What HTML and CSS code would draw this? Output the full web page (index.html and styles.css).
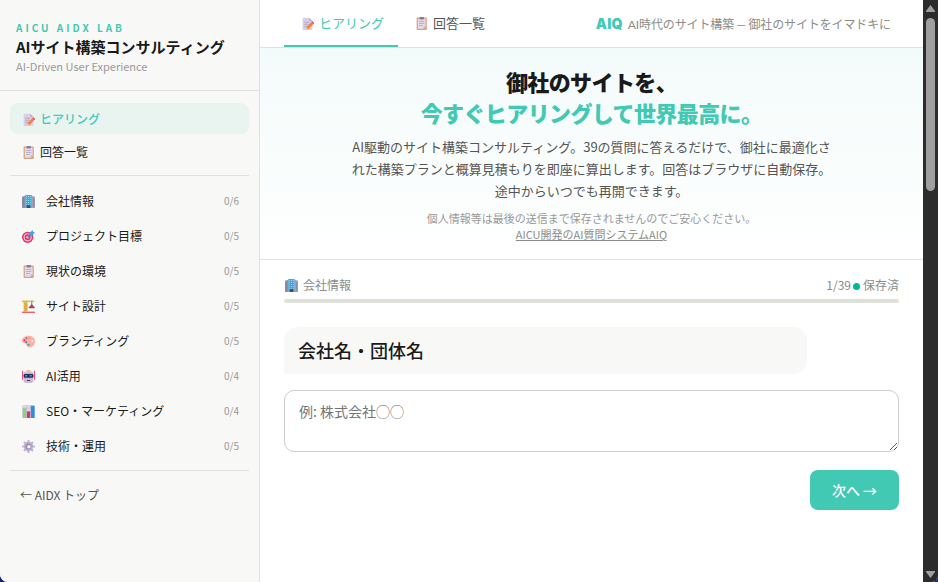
FILE: index.html
```html
<!DOCTYPE html>
<html lang="ja">
<head>
    <meta charset="UTF-8">
    <meta name="viewport" content="width=device-width, initial-scale=1.0">
    <title>AIサイト構築コンサルティング</title>
    <link rel="stylesheet" href="styles.css">
</head>
<body>
    <!-- アイコン定義 -->
    <svg class="icon-defs" width="0" height="0">
        <symbol id="memo" viewBox="0 0 16 16">
            <path fill="#d8d0e6" d="M2 1h8l4 4v10a1 1 0 0 1-1 1H2z"/>
            <path fill="#b9afc9" d="M10 1l4 4h-4z"/>
            <path stroke="#aaa0b8" d="M4 6.500h6M4 9h5M4 11.500h3"/>
            <path fill="#ff7e36" d="M12.500 6.500l2.500 2.500-6 6-3.500 1 1-3.500z"/>
            <path fill="#f6405a" d="M12.500 6.500l1.500-1.300 2.500 2.500L15 9z"/>
            <path fill="#ffd0a0" d="M6.500 12.500l2.500 2.500-3.500 1z"/>
        </symbol>
        <symbol id="clipboard" viewBox="0 0 16 16">
            <rect x="2" y="0.500" width="12.500" height="15.500" rx="1" fill="#dba27e"/>
            <path fill="#e3dcef" d="M3.500 2H13v9.500L10.500 14.500h-7z"/>
            <path fill="#c3b8d2" d="M10.500 14.500v-3H13z"/>
            <rect x="5.500" y="0" width="5.500" height="3" rx="1" fill="#837d96"/>
            <path stroke="#b0a6c0" d="M5 5.500h6.500M5 8h6.500M5 10.500h4.500"/>
        </symbol>
        <symbol id="building" viewBox="0 0 16 16">
            <path fill="#8b91aa" d="M0 2l4-1v15H0z"/>
            <path fill="#a7a1b8" d="M12 1l4 1v14h-4z"/>
            <path fill="#4d9dcc" d="M4 0h8v16H4z"/>
            <path fill="#7682a0" d="M1 4h1v10H1zM14 4h1v10h-1z"/>
            <path stroke="#86d8f4" stroke-width="1.300" stroke-dasharray="1.500 1" d="M5.700 1v11M8 1v11M10.300 1v11"/>
            <path fill="#474a6c" d="M6 12.500h4V16H6z"/>
        </symbol>
        <symbol id="target" viewBox="0 0 16 16">
            <circle cx="7" cy="9" r="7" fill="#e4356b"/>
            <circle cx="7" cy="9" r="5" fill="#f0c4d8"/>
            <circle cx="7" cy="9" r="3.700" fill="#df3567"/>
            <circle cx="7" cy="9" r="1.800" fill="#f0b8cc"/>
            <path stroke="#317cc0" stroke-width="1.400" d="M7 9l5-5"/>
            <path fill="#39a4ef" d="M9 4L13 0l.6 2.400L16 3l-4 4H9z"/>
        </symbol>
        <symbol id="crane" viewBox="0 0 16 16">
            <path fill="#e6b84c" d="M0 .5h15v2H0zM2 2h5v12H2z"/>
            <path stroke="#c9933c" stroke-width=".8" fill="none" d="M3 4l3 2.500L3 9l3 2.500L3 14"/>
            <path stroke="#615765" d="M12 2v4"/>
            <path fill="#a94450" d="M12 5l3.500 4v1h-7V9z"/>
            <path fill="#f15e73" d="M0 14.300h16V16H0z"/>
        </symbol>
        <symbol id="palette" viewBox="0 0 16 16">
            <path fill="#ffb1a0" d="M8.500 1C3 1 0 4 0 7.500c0 2.300 2 2.500 4 2.700s.5 4.800 5 4.800c4.500 0 7-3.300 7-7s-3-7-7.500-7z"/>
            <circle cx="12.500" cy="7.500" r="1.200" fill="#f8f8f6"/>
            <circle cx="3" cy="6.500" r="1.400" fill="#e43972"/>
            <circle cx="5.500" cy="4" r="1.200" fill="#8f60d3"/>
            <circle cx="9" cy="3.500" r="1" fill="#e08bb0"/>
            <circle cx="5" cy="9" r="1.200" fill="#3e7cc2"/>
            <circle cx="8" cy="12" r="1.300" fill="#25a99e"/>
        </symbol>
        <symbol id="robot" viewBox="0 0 16 16">
            <path fill="#f3487b" d="M0 1h1.300v11H0zM14.700 1H16v11h-1.300z"/>
            <path fill="#f6b83d" d="M5 2q0-2 3-2t3 2z"/>
            <path fill="#c9badc" d="M4 2h8q2 0 2 3v7q0 4-3 4H5q-3 0-3-4V5q0-3 2-3z"/>
            <rect x="2" y="5" width="12" height="4.500" rx="1.500" fill="#272c54"/>
            <path fill="#38a5e9" d="M4 6.200h2.500V8H4zM9.500 6.200H12V8H9.500z"/>
            <path fill="#4c405d" d="M6 12.300h4v1.200H6z"/>
        </symbol>
        <symbol id="chart" viewBox="0 0 16 16">
            <rect width="16" height="16" rx="1" fill="#ddd5e8"/>
            <path stroke="#b9aac9" stroke-width=".6" d="M0 4h16M0 8h16M0 12h16M5.500 0v16M10.500 0v16"/>
            <path fill="#83db70" d="M1 4h4v12H1z"/>
            <path fill="#d9336d" d="M6 8h4v8H6z"/>
            <path fill="#318ed3" d="M11 1h4.500v15H11z"/>
        </symbol>
        <symbol id="gear" viewBox="0 0 16 16">
            <path stroke="#c3b6d6" stroke-width="2.600" d="M8 0v16M0 8h16M2.400 2.400l11.200 11.200M13.600 2.400L2.400 13.600"/>
            <circle cx="8" cy="8" r="5.700" fill="#b9abcd"/>
            <circle cx="8" cy="8" r="3.300" fill="#9386a9"/>
            <circle cx="8.500" cy="8.200" r="2.200" fill="#f8f8f6"/>
        </symbol>
    </svg>

    <div class="window">
        <aside class="sidebar">
            <div class="brand">
                <div class="brand-label">AICU AIDX LAB</div>
                <div class="brand-title">AIサイト構築コンサルティング</div>
                <div class="brand-sub">AI-Driven User Experience</div>
            </div>
            <nav class="side-nav">
                <a class="nav-item active"><svg class="icon"><use href="#memo"/></svg>ヒアリング</a>
                <a class="nav-item"><svg class="icon"><use href="#clipboard"/></svg>回答一覧</a>
            </nav>
            <ul class="sections">
                <li><svg class="icon"><use href="#building"/></svg><span>会社情報</span><small>0/6</small></li>
                <li><svg class="icon"><use href="#target"/></svg><span>プロジェクト目標</span><small>0/5</small></li>
                <li><svg class="icon"><use href="#clipboard"/></svg><span>現状の環境</span><small>0/5</small></li>
                <li><svg class="icon"><use href="#crane"/></svg><span>サイト設計</span><small>0/5</small></li>
                <li><svg class="icon"><use href="#palette"/></svg><span>ブランディング</span><small>0/5</small></li>
                <li><svg class="icon"><use href="#robot"/></svg><span>AI活用</span><small>0/4</small></li>
                <li><svg class="icon"><use href="#chart"/></svg><span>SEO・マーケティング</span><small>0/4</small></li>
                <li><svg class="icon"><use href="#gear"/></svg><span>技術・運用</span><small>0/5</small></li>
            </ul>
            <a class="back-link">← AIDX トップ</a>
        </aside>

        <main class="main">
            <header class="topbar">
                <a class="tab active"><svg class="icon"><use href="#memo"/></svg>ヒアリング</a>
                <a class="tab"><svg class="icon"><use href="#clipboard"/></svg>回答一覧</a>
                <div class="tagline"><b>AIQ</b><span>AI時代のサイト構築 — 御社のサイトをイマドキに</span></div>
            </header>
            <section class="hero">
                <h1>御社のサイトを、<br><em>今すぐヒアリングして世界最高に。</em></h1>
                <p class="lead">AI駆動のサイト構築コンサルティング。39の質問に答えるだけで、御社に最適化された構築プランと概算見積もりを即座に算出します。回答はブラウザに自動保存。途中からいつでも再開できます。</p>
                <p class="note">個人情報等は最後の送信まで保存されませんのでご安心ください。<br><a>AICU開発のAI質問システムAIQ</a></p>
            </section>
            <section class="form">
                <div class="progress-info">
                    <span class="category"><svg class="icon"><use href="#building"/></svg>会社情報</span>
                    <span class="status">1/39<i class="dot"></i>保存済</span>
                </div>
                <div class="progress-bar"></div>
                <div class="question">会社名・団体名</div>
                <textarea class="answer" placeholder="例: 株式会社◯◯"></textarea>
                <button class="next-btn">次へ →</button>
            </section>
        </main>

        <!-- スクロールバー -->
        <div class="scrollbar">
            <svg class="arrow" viewBox="0 0 9 7"><path d="M4.500 0L9 6v1H0V6z"/></svg>
            <div class="thumb"></div>
            <svg class="arrow down" viewBox="0 0 9 7"><path d="M0 0h9v1L4.500 7 0 1z"/></svg>
        </div>
    </div>
</body>
</html>
```

FILE: styles.css
```css
* {
    box-sizing: border-box;
}

body {
    margin: 0;
    background-color: #17247c;
    font-family: "Noto Sans CJK JP", sans-serif;
    color: #1a1a1a;
    overflow: hidden;
}

.icon-defs {
    position: absolute;
}

.icon {
    width: 13px;
    height: 13px;
    flex-shrink: 0;
}

.window {
    display: flex;
    height: 582px;
    background-color: #fff;
    border-radius: 0 0 6px 8px;
    overflow: hidden;
}

/* サイドバー */
.sidebar {
    width: 260px;
    flex-shrink: 0;
    background-color: #f8f8f6;
    border-right: 1px solid #e0e0de;
}

.brand {
    height: 91px;
    padding: 20px 16px 0;
    border-bottom: 1px solid #e0e0de;
    white-space: nowrap;
}

.brand-label {
    font-size: 10px;
    line-height: 16px;
    font-weight: 700;
    letter-spacing: 3px;
    color: #41c9b4;
}

.brand-title {
    font-size: 15px;
    line-height: 22px;
    font-weight: 700;
}

.brand-sub {
    font-size: 11px;
    line-height: 17px;
    color: #999;
}

.side-nav {
    margin: 0 10px;
    padding: 12px 0 8px;
    border-bottom: 1px solid #e0e0de;
}

.nav-item {
    display: flex;
    align-items: center;
    gap: 5px;
    height: 31px;
    padding: 0 12px;
    border-radius: 8px;
    font-size: 12px;
}

.nav-item .icon {
    margin-top: 1px;
}

.nav-item.active {
    margin-bottom: 2px;
    background-color: #e9f4f0;
    color: #41c9b4;
    font-weight: 500;
}

.sections {
    list-style: none;
    margin: 0 10px;
    padding: 7px 0;
    border-bottom: 1px solid #e0e0de;
}

.sections li {
    display: flex;
    align-items: center;
    height: 35px;
    padding: 0 10px 0 12px;
    font-size: 12px;
}

.sections .icon {
    margin-top: 1px;
}

.sections span {
    flex: 1;
    margin-left: 11px;
}

.sections small {
    font-size: 10px;
    color: #999;
}

.back-link {
    display: block;
    padding: 15px 20px;
    font-size: 12px;
    line-height: 18px;
    color: #555;
}

/* メイン */
.main {
    flex: 1;
}

.topbar {
    display: flex;
    height: 48px;
    padding: 0 32px 0 24px;
    border-bottom: 1px solid #e0e0de;
}

.tab {
    display: flex;
    align-items: center;
    gap: 5px;
    padding: 0 14px 0 17px;
    border-bottom: 2px solid transparent;
    font-size: 13px;
    color: #555;
}

.tab .icon {
    margin-top: 1px;
}

.tab.active {
    border-bottom-color: #41c9b4;
    color: #41c9b4;
}

.tagline {
    display: flex;
    align-items: center;
    gap: 5px;
    margin-left: auto;
    font-family: Lato, "Noto Sans CJK JP", sans-serif;
    font-size: 12px;
    color: #8c8c88;
    white-space: nowrap;
}

.tagline span {
    letter-spacing: -0.12px;
    word-spacing: -0.5px;
}

.tagline b {
    font-family: Inter, sans-serif;
    font-size: 14px;
    font-weight: 900;
    letter-spacing: 0.3px;
    color: #41c9b4;
}

.hero {
    height: 212px;
    padding-top: 18px;
    border-bottom: 1px solid #e0e0de;
    background: linear-gradient(180deg, #f3fbfa, #fff);
    text-align: center;
}

.hero h1 {
    margin: 0 0 8px;
    font-size: 22px;
    line-height: 31px;
    font-weight: 900;
    letter-spacing: -0.6px;
}

.hero em {
    font-style: normal;
    color: #41c9b4;
}

.lead {
    width: 480px;
    margin: 0 auto 8px;
    font-size: 13px;
    line-height: 22px;
    color: #555;
}

.note {
    margin: 0;
    font-size: 11px;
    line-height: 16px;
    color: #999;
}

.note a {
    color: #8c8c88;
    text-decoration: underline;
}

/* 質問フォーム */
.form {
    display: flex;
    flex-direction: column;
    padding: 16px 24px 0;
}

.progress-info {
    display: flex;
    justify-content: space-between;
    height: 18px;
    margin-bottom: 5px;
    font-size: 12px;
    line-height: 18px;
    color: #8c8c88;
}

.category,
.status {
    display: flex;
    align-items: center;
}

.category {
    gap: 5px;
    padding-left: 1px;
}

.dot {
    width: 7px;
    height: 7px;
    margin: 2px 3px 0 2px;
    border-radius: 50%;
    background-color: #00b894;
}

.progress-bar {
    height: 4px;
    border-radius: 2px;
    background-color: #e0e2da;
}

.question {
    width: 85%;
    height: 47px;
    margin: 24px 0 16px;
    padding: 0 14px;
    border-radius: 14px 14px 14px 4px;
    background-color: #f8f8f6;
    font-size: 18px;
    line-height: 47px;
    font-weight: 500;
}

.answer {
    height: 62px;
    margin: 0 0 18px;
    padding: 10px 14px;
    border: 1px solid #ccc;
    border-radius: 10px;
    font-family: inherit;
    font-size: 14px;
    line-height: 21px;
}

.next-btn {
    align-self: flex-end;
    width: 89px;
    height: 40px;
    padding: 0;
    border: none;
    border-radius: 8px;
    background-color: #41c9b4;
    color: #fff;
    font-family: inherit;
    font-size: 14px;
    font-weight: 500;
}

/* スクロールバー */
.scrollbar {
    display: flex;
    flex-direction: column;
    align-items: center;
    width: 15px;
    padding: 5px 0 4px;
    background-color: #2c2c2c;
}

.arrow {
    width: 9px;
    height: 7px;
    fill: #9f9f9f;
}

.arrow.down {
    margin-top: auto;
}

.thumb {
    width: 9px;
    height: 173px;
    margin-top: 6px;
    border-radius: 5px;
    background-color: #9f9f9f;
}
```
